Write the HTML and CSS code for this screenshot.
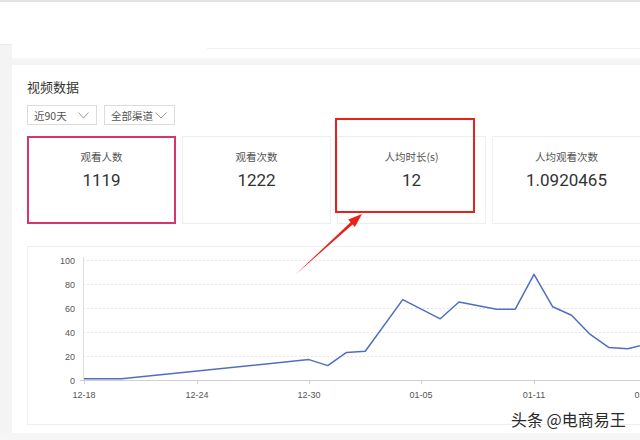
FILE: index.html
```html
<!DOCTYPE html>
<html lang="zh">
<head>
<meta charset="utf-8">
<title>视频数据</title>
<link rel="stylesheet" href="styles.css">
</head>
<body>
<div class="topline"></div>
<div class="header"></div>
<div class="layout">
  <div class="gutter"></div>
  <div class="main">
    <div class="header-rest"><div class="header-line"></div></div>
    <div class="band"></div>
    <section class="card">
      <h2 class="title">视频数据</h2>
      <div class="filters">
        <div class="select select-a"><span>近90天</span><svg class="chev" width="11" height="7" viewBox="0 0 11 7"><path d="M0.5 0.5 L5.5 6 L10.5 0.5" fill="none" stroke="#9a9a9a" stroke-width="1"/></svg></div>
        <div class="select select-b"><span>全部渠道</span><svg class="chev" width="12" height="7" viewBox="0 0 12 7"><path d="M0.5 0.5 L6 6 L11.5 0.5" fill="none" stroke="#9a9a9a" stroke-width="1"/></svg></div>
      </div>
      <div class="metrics">
        <div class="metric active"><div class="m-label">观看人数</div><div class="m-value">1119</div></div>
        <div class="metric"><div class="m-label">观看次数</div><div class="m-value">1222</div></div>
        <div class="metric"><div class="m-label">人均时长(s)</div><div class="m-value">12</div></div>
        <div class="metric"><div class="m-label">人均观看次数</div><div class="m-value">1.0920465</div></div>
      </div>
      <div class="chart">
        <svg class="chart-svg" width="640" height="177" viewBox="28 246 640 177">
          <g stroke="#e6e6e6" stroke-width="1" stroke-dasharray="2 2">
            <line x1="83" y1="259.5" x2="668" y2="259.5"/>
            <line x1="83" y1="283.5" x2="668" y2="283.5"/>
            <line x1="83" y1="307.5" x2="668" y2="307.5"/>
            <line x1="83" y1="331.5" x2="668" y2="331.5"/>
            <line x1="83" y1="355.5" x2="668" y2="355.5"/>
          </g>
          <line x1="83.5" y1="256" x2="83.5" y2="379" stroke="#e0e0e0"/>
          <line x1="80" y1="379.5" x2="668" y2="379.5" stroke="#cfcfcf"/>
          <g stroke="#cfcfcf">
            <line x1="84.5" y1="379" x2="84.5" y2="383"/>
            <line x1="197.5" y1="379" x2="197.5" y2="383"/>
            <line x1="309.5" y1="379" x2="309.5" y2="383"/>
            <line x1="421.5" y1="379" x2="421.5" y2="383"/>
            <line x1="534.5" y1="379" x2="534.5" y2="383"/>
            <line x1="646.5" y1="379" x2="646.5" y2="383"/>
          </g>
          <g class="ylab" text-anchor="end">
            <text x="75" y="262.5">100</text>
            <text x="75" y="286.5">80</text>
            <text x="75" y="310.5">60</text>
            <text x="75" y="334.5">40</text>
            <text x="75" y="358.5">20</text>
            <text x="75" y="382.5">0</text>
          </g>
          <g class="xlab" text-anchor="middle">
            <text x="84" y="396.5">12-18</text>
            <text x="197" y="396.5">12-24</text>
            <text x="309" y="396.5">12-30</text>
            <text x="421" y="396.5">01-05</text>
            <text x="534" y="396.5">01-11</text>
            <text x="646" y="396.5">01-17</text>
          </g>
          <polyline fill="none" stroke="#4f6fbe" stroke-width="1.5" stroke-linejoin="round"
            points="84,377.8 121.5,377.8 309,358.6 327.75,364.6 346.5,351.4 365.25,350.2 402.75,298.6 440.25,317.8 459,301 496.5,308.2 515.25,308.2 534,273.4 552.75,305.8 571.5,314.2 590.25,333.4 609,346.6 627.75,347.8 646.5,343"/>
        </svg>
      </div>
    </section>
  </div>
</div>
<div class="redbox"></div>
<svg class="arrow" width="640" height="440" viewBox="0 0 640 440"><polygon fill="#e8221b" points="295,275 350.6,222.2 348.3,219.6 362,214 354.9,227 352.6,224.4"/></svg>
<div class="watermark">头条 @电商易王</div>
</body>
</html>
```
FILE: styles.css
```css
html, body {
  margin: 0;
  padding: 0;
  overflow: hidden;
}
body {
  width: 640px;
  height: 440px;
  background: #f6f6f6;
  font-family: "Noto Sans CJK SC", "Noto Sans", sans-serif;
  color: #333;
  position: relative;
}
.topline {
  height: 2px;
  background: #e2e2e2;
}
.header {
  height: 42px;
  background: #fff;
}
.layout {
  display: flex;
}
.gutter {
  width: 12px;
  flex: none;
  background: #f4f4f4;
  border-top: 1px solid #ebebeb;
}
.main {
  flex: 1;
  min-width: 0;
  overflow: hidden;
}
.header-rest {
  height: 14px;
  background: #fff;
  padding-top: 4px;
  box-sizing: border-box;
}
.header-line {
  margin-left: 195px;
  height: 1px;
  background: #efefef;
}
.band {
  height: 7px;
  background: linear-gradient(#f8f8f8, #f3f3f3);
}
.card {
  background: #fff;
  padding: 12px 0 8px 15px;
  width: 660px;
}
.title {
  margin: 0;
  font-size: 13px;
  line-height: 19px;
  font-weight: normal;
  color: #333;
}
.filters {
  display: flex;
  gap: 7px;
  margin-top: 9px;
}
.select {
  height: 20px;
  box-sizing: border-box;
  border: 1px solid #dcdcdc;
  display: flex;
  align-items: center;
  justify-content: space-between;
  padding: 0 7px 0 6px;
  font-size: 10.5px;
  color: #555;
  white-space: nowrap;
}
.select-a { width: 70px; }
.select-b { width: 71px; padding-right: 7px; }
.chev { display: block; flex: none; }
.metrics {
  display: flex;
  gap: 6px;
  margin-top: 11px;
}
.metric {
  width: 149px;
  height: 88px;
  box-sizing: border-box;
  border: 1px solid #eeeeee;
  padding-top: 13px;
  text-align: center;
}
.metric.active {
  border: 2px solid #d6366a;
  padding-top: 12px;
}
.m-label {
  font-size: 10.5px;
  line-height: 14px;
  color: #555;
}
.m-value {
  margin-top: 5px;
  font-family: Roboto, "Noto Sans", sans-serif;
  font-size: 17px;
  line-height: 22px;
  color: #333;
}
.chart {
  margin-top: 22px;
  height: 179px;
  width: 640px;
  box-sizing: border-box;
  border: 1px solid #eeeeee;
}
.chart-svg {
  display: block;
}
.ylab text, .xlab text {
  font-family: "Liberation Sans", Arial, sans-serif;
  font-size: 9px;
  fill: #555;
}
.redbox {
  position: absolute;
  left: 335px;
  top: 118px;
  width: 140px;
  height: 95px;
  box-sizing: border-box;
  border: 2px solid #e5231b;
}
.arrow {
  position: absolute;
  left: 0;
  top: 0;
}
.watermark {
  position: absolute;
  left: 511px;
  top: 409px;
  font-size: 16px;
  line-height: 20px;
  color: #2a2a2a;
  text-shadow: 0 0 2px #fff, 0 0 2px #fff, 1px 1px 0 #fff, -1px -1px 0 #fff;
}
```
